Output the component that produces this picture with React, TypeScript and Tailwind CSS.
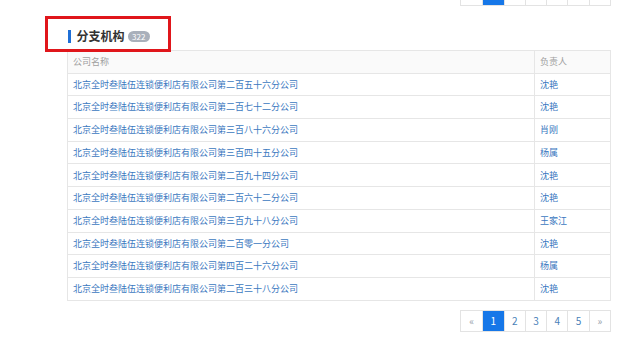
import React from "react";

type Branch = {
    name: string
    owner: string
}

const branches: Branch[] = [
    { name: "北京全时叁陆伍连锁便利店有限公司第二百五十六分公司", owner: "沈艳" },
    { name: "北京全时叁陆伍连锁便利店有限公司第二百七十二分公司", owner: "沈艳" },
    { name: "北京全时叁陆伍连锁便利店有限公司第三百八十六分公司", owner: "肖刚" },
    { name: "北京全时叁陆伍连锁便利店有限公司第三百四十五分公司", owner: "杨属" },
    { name: "北京全时叁陆伍连锁便利店有限公司第二百九十四分公司", owner: "沈艳" },
    { name: "北京全时叁陆伍连锁便利店有限公司第二百六十二分公司", owner: "沈艳" },
    { name: "北京全时叁陆伍连锁便利店有限公司第三百九十八分公司", owner: "王家江" },
    { name: "北京全时叁陆伍连锁便利店有限公司第二百零一分公司", owner: "沈艳" },
    { name: "北京全时叁陆伍连锁便利店有限公司第四百二十六分公司", owner: "杨属" },
    { name: "北京全时叁陆伍连锁便利店有限公司第二百三十八分公司", owner: "沈艳" },
]

const pages = ["«", "1", "2", "3", "4", "5", "»"]

// top pager is scrolled mostly out of view, so it only shows the boxes
const Pager = ({ className, hideText }: { className?: string, hideText?: boolean }) => (
    <div className={"flex justify-end " + (className || "")}>
        <div className="flex border border-[#e3e3e3] bg-white">
            {pages.map((p, i) => (
                <div
                    key={i}
                    className={
                        "w-[21.3px] h-[20px] flex items-center justify-center text-[10px] " +
                        (i > 0 ? "border-l border-[#e3e3e3] " : "") +
                        (p === "1"
                            ? "bg-[#1677e8] text-white"
                            : p === "«" || p === "»"
                            ? "text-[#9aa3ad]"
                            : "text-[#4a7fb8]")
                    }
                >
                    {hideText ? "" : p}
                </div>
            ))}
        </div>
    </div>
)

const App = () => {
    return (
        <div
            className="relative w-[640px] h-[358px] bg-white overflow-hidden"
            style={{ fontFamily: '"Noto Sans CJK SC", "Noto Sans", sans-serif' }}
        >
            <div className="ml-[67px] w-[544px]">
                <Pager className="-mt-[16px]" hideText />

                <div className="flex items-center h-[14px] mt-[23px] mb-[7px] pl-[1px]">
                    <span className="w-[2.5px] h-[13px] bg-[#1f6fd6] mr-[6px]" />
                    <span className="text-[12px] font-bold text-[#333] leading-none">分支机构</span>
                    <span className="ml-[3px] h-[11px] px-[4.5px] rounded-full bg-[#a9b0bb] text-white text-[8px] leading-[11px]">322</span>
                </div>

                <div className="border border-[#e6e6e6] border-b-0">
                    <div className="flex h-[22.7px] bg-[#fafafa] border-b border-[#e6e6e6] text-[9px] text-[#a0a0a0]">
                        <div className="w-[467px] px-[5px] flex items-center border-r border-[#e6e6e6]">公司名称</div>
                        <div className="flex-1 px-[5px] flex items-center">负责人</div>
                    </div>
                    {branches.map((b, i) => (
                        <div key={i} className="flex h-[22.7px] border-b border-[#e6e6e6] text-[9px] text-[#3b78c0]">
                            <div className="w-[467px] px-[5px] flex items-center border-r border-[#e6e6e6]">{b.name}</div>
                            <div className="flex-1 px-[5px] flex items-center">{b.owner}</div>
                        </div>
                    ))}
                </div>

                <Pager className="mt-[9px]" />
            </div>

            <div className="absolute left-[45px] top-[16px] w-[126px] h-[36px] border-[3px] border-[#e0161b]" />
        </div>
    )
}

export default App
